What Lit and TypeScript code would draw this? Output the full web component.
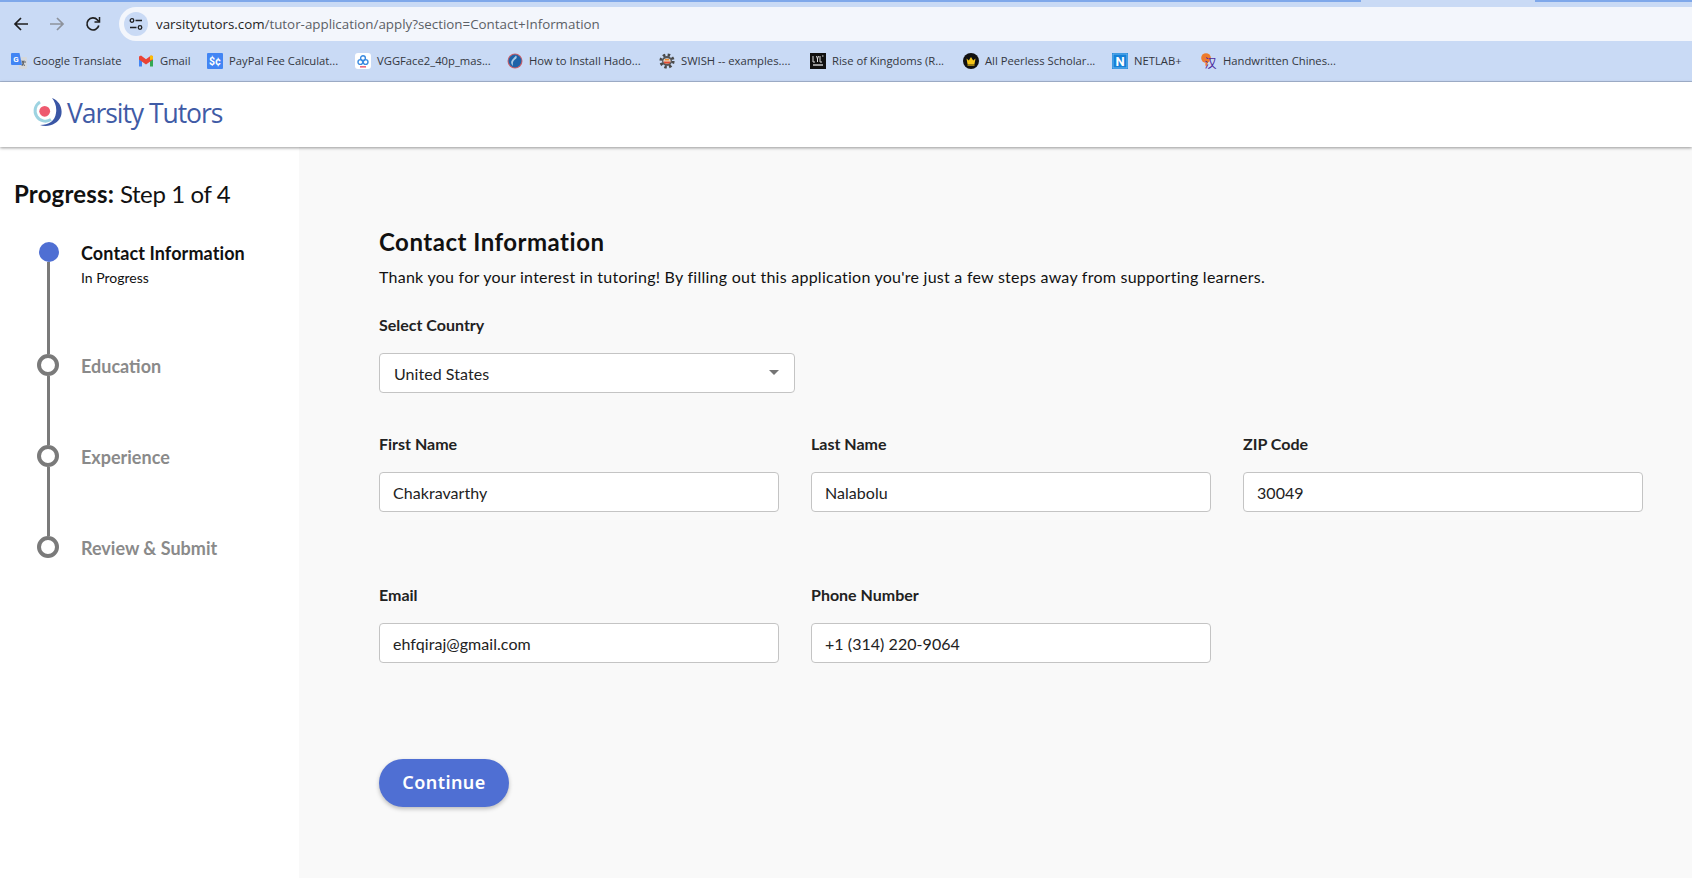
import { LitElement, css, html, svg } from 'lit';
import { customElement } from 'lit/decorators.js';

const BOOKMARK_ICONS = {
  translate: svg`
    <path d="M7 4h8a1 1 0 0 1 1 1v10a1 1 0 0 1-1 1H8z" fill="#d5d8dc"/>
    <path d="M11 7.5l2.5 5.5M13 7.5l-2 5.5M10.5 9h4.5" stroke="#5f6368" stroke-width="1" fill="none"/>
    <path d="M1 0h7.5l2.5 12H1a1 1 0 0 1-1-1V1a1 1 0 0 1 1-1z" fill="#4285f4"/>
    <text x="5" y="8.5" font-size="8" font-weight="700" text-anchor="middle" fill="#fff" font-family="Roboto, sans-serif">G</text>`,
  gmail: svg`
    <path d="M1 4v9.5h3V6.5z" fill="#4285f4"/>
    <path d="M15 4v9.5h-3V6.5z" fill="#34a853"/>
    <path d="M1 3.5v3L8 11.5l7-5v-3L13 2.5 8 6.2 3 2.5z" fill="#ea4335"/>
    <path d="M12 2.9V7l3-.5V3.5C15 2.5 13 2 12 2.9z" fill="#fbbc04"/>`,
  paypal: svg`
    <rect width="16" height="16" rx="1" fill="#4285f4"/>
    <text x="8" y="12" font-size="10.5" font-weight="700" text-anchor="middle" fill="#fff" font-family="Roboto, sans-serif">$¢</text>`,
  vgg: svg`
    <rect width="16" height="16" rx="3" fill="#fff"/>
    <g fill="none" stroke="#3b8be0" stroke-width="1.4">
      <circle cx="8" cy="5.2" r="2.4"/><circle cx="5.4" cy="9" r="2.4"/><circle cx="10.6" cy="9" r="2.4"/>
    </g>
    <rect x="5" y="13.2" width="6" height="1.3" fill="#e8455c"/>`,
  globe: svg`
    <circle cx="8" cy="8" r="7.5" fill="#c8606a"/>
    <circle cx="8" cy="8" r="6.4" fill="#1c62a8"/>
    <path d="M9 2.5c1.5 2 .5 3-1 4S5.500 9 6 13c-2-2-2.500-4-1-6s3-3 4-4.500z" fill="#a9cbe6"/>`,
  swish: svg`
    <circle cx="8" cy="8" r="6" fill="none" stroke="#4a4a4a" stroke-width="3.200" stroke-dasharray="2.400 2.300"/>
    <circle cx="8" cy="8" r="5" fill="#54565a"/>
    <ellipse cx="8" cy="8" rx="3.600" ry="2.800" fill="#e8e4de"/>
    <path d="M4.500 8.500h7l-1 2h-5z" fill="#e2492d"/>
    <path d="M6 6h4l.6 1.500H5.400z" fill="#f08a2c"/>`,
  rok: svg`
    <rect width="16" height="16" fill="#111"/>
    <path d="M3 3v6h2M6.500 3l1 3 1-3M7.500 6v3M10 3v6h2M13.500 3h-1.500" stroke="#ddd" stroke-width="1" fill="none"/>
    <rect x="3" y="11" width="10" height="2" fill="#999"/>`,
  crown: svg`
    <circle cx="8" cy="8" r="8" fill="#111"/>
    <path d="M3.500 5.500l2.300 2L8 4l2.200 3.500 2.300-2-1 5.500h-7z" fill="#f5c518"/>
    <rect x="4.500" y="11.400" width="7" height="1.200" fill="#f5c518"/>`,
  netlab: svg`
    <rect width="16" height="16" fill="#1581d8"/>
    <rect x="1" y="1" width="14" height="14" fill="none" stroke="#6cb6ee" stroke-width="1"/>
    <text x="8" y="13" font-size="13" font-weight="700" text-anchor="middle" fill="#fff" font-family="Roboto, sans-serif">N</text>`,
  hanzi: svg`
    <circle cx="5" cy="5" r="4.800" fill="#ee7b2c"/>
    <path d="M6 9c-1 2-1 3 0 4" stroke="#ee7b2c" stroke-width="2" fill="none"/>
    <text x="9.500" y="14.500" font-size="12" text-anchor="middle" fill="#4b2a9c" font-family="'Noto Sans CJK SC', sans-serif">汉</text>`,
};

const BOOKMARKS = [
  { icon: 'translate', label: 'Google Translate', width: 127 },
  { icon: 'gmail', label: 'Gmail', width: 69 },
  { icon: 'paypal', label: 'PayPal Fee Calculat...', width: 148 },
  { icon: 'vgg', label: 'VGGFace2_40p_mas...', width: 152 },
  { icon: 'globe', label: 'How to Install Hado...', width: 152 },
  { icon: 'swish', label: 'SWISH -- examples....', width: 151 },
  { icon: 'rok', label: 'Rise of Kingdoms (R...', width: 153 },
  { icon: 'crown', label: 'All Peerless Scholar...', width: 149 },
  { icon: 'netlab', label: 'NETLAB+', width: 89 },
  { icon: 'hanzi', label: 'Handwritten Chines...', width: 160 },
] as const;

const STEPS = [
  { label: 'Contact Information', note: 'In Progress', active: true },
  { label: 'Education', active: false },
  { label: 'Experience', active: false },
  { label: 'Review & Submit', active: false },
];

const FIELDS = [
  { label: 'First Name', value: 'Chakravarthy' },
  { label: 'Last Name', value: 'Nalabolu' },
  { label: 'ZIP Code', value: '30049' },
  { label: 'Email', value: 'ehfqiraj@gmail.com' },
  { label: 'Phone Number', value: '+1 (314) 220-9064' },
];

@customElement('app-root')
export class AppRoot extends LitElement {
  static styles = css`
    :host {
      display: flex;
      flex-direction: column;
      width: 100%;
      height: 878px;
      overflow: hidden;
      font-family: Lato, sans-serif;
      color: #111;
      background: #fff;
    }

    .tabstrip {
      display: flex;
      justify-content: space-between;
      height: 7px;
      background: #c9daf5;
      flex: none;
    }
    .tabstrip i {
      display: block;
      height: 2px;
      background: #7fa8ea;
    }
    .tabstrip i:first-child { width: 1361px; }
    .tabstrip i:last-child { width: 157px; }

    .toolbar {
      display: flex;
      align-items: center;
      height: 34px;
      padding-left: 3px;
      background: #c9daf5;
      flex: none;
    }
    .nav {
      display: flex;
      align-items: center;
      justify-content: center;
      width: 36px;
      height: 34px;
      flex: none;
    }
    .omnibox {
      display: flex;
      align-items: center;
      flex: 1;
      height: 34px;
      margin-left: 8px;
      padding-left: 5px;
      border-radius: 17px 0 0 17px;
      background: #f3f6fc;
      font-family: 'Open Sans', sans-serif;
      font-size: 13.35px;
      color: #5b5f66;
    }
    .site-info {
      display: flex;
      align-items: center;
      justify-content: center;
      width: 24px;
      height: 24px;
      margin-right: 8px;
      border-radius: 50%;
      background: #c9daf5;
    }
    .omnibox b {
      font-weight: 400;
      color: #1f1f1f;
    }

    .bookmarks {
      display: flex;
      align-items: center;
      height: 40px;
      padding-left: 11px;
      background: #c9daf5;
      border-bottom: 1px solid #a7b7d2;
      font-family: 'Open Sans', sans-serif;
      font-size: 11.25px;
      color: #33373f;
      flex: none;
    }
    .bookmark {
      display: flex;
      align-items: center;
      gap: 6px;
      flex: none;
      white-space: nowrap;
    }
    .bookmark svg { flex: none; }
    .bookmark span { margin-top: -2px; }

    .site-header {
      position: relative;
      z-index: 1;
      display: flex;
      align-items: center;
      gap: 5px;
      box-sizing: border-box;
      height: 65px;
      padding: 0 0 4px 32px;
      background: #fff;
      box-shadow: 0 1px 3px rgba(0, 0, 0, 0.4);
      flex: none;
    }
    .wordmark {
      font-family: 'Open Sans', sans-serif;
      font-size: 26.5px;
      letter-spacing: -1.05px;
      color: #3f5ba6;
    }

    .body {
      display: flex;
      flex: 1;
      min-height: 0;
    }

    .sidebar {
      width: 299px;
      box-sizing: border-box;
      padding: 31px 0 0 14px;
      background: #fff;
      flex: none;
    }
    .progress {
      margin: 0;
      font-size: 24px;
      font-weight: 400;
      line-height: 32px;
      letter-spacing: -0.4px;
    }
    .progress strong { letter-spacing: 0.2px; }
    .steps {
      margin-top: 33px;
      padding-left: 23px;
    }
    .step {
      display: flex;
      gap: 22px;
      height: 91px;
    }
    .step:first-child { height: 111px; }
    .step:last-child { height: 22px; }
    .marker {
      display: flex;
      flex-direction: column;
      align-items: center;
      width: 22px;
      flex: none;
    }
    .dot {
      box-sizing: border-box;
      width: 22px;
      height: 22px;
      border: 4px solid #7a7a7a;
      border-radius: 50%;
      background: #fff;
      flex: none;
    }
    .step.active .dot {
      width: 20px;
      height: 20px;
      margin: -1px 0 0 2px;
      border: 0;
      background: #4f6fd3;
    }
    .line {
      width: 3px;
      flex: 1;
      background: #7a7a7a;
    }
    .step-label {
      padding-top: 1px;
      font-size: 18px;
      font-weight: 700;
      line-height: 22px;
      color: #8a8a8a;
    }
    .step.active .step-label {
      padding-top: 0;
      margin-top: -1px;
      letter-spacing: 0.1px;
      color: #111;
    }
    .step-note {
      margin-top: 5px;
      font-size: 14px;
      line-height: 18px;
    }

    .main {
      flex: 1;
      box-sizing: border-box;
      padding: 80px 49px 0 80px;
      background: #f9f9f9;
    }
    h2 {
      margin: 0;
      font-size: 24px;
      font-weight: 700;
      line-height: 30px;
      letter-spacing: 0.5px;
    }
    .intro {
      margin: 8px 0 0;
      font-size: 16px;
      line-height: 24px;
      letter-spacing: 0.25px;
    }
    label {
      display: block;
      font-size: 16px;
      font-weight: 700;
      line-height: 20px;
      color: #222;
    }
    .country { margin-top: 26px; }
    .box {
      display: flex;
      align-items: center;
      justify-content: space-between;
      box-sizing: border-box;
      width: 100%;
      height: 40px;
      margin-top: 18px;
      padding: 0 13px;
      border: 1px solid #c4c4c4;
      border-radius: 4px;
      background: #fff;
      font: 400 16px Lato, sans-serif;
      letter-spacing: 0.05px;
      color: #222;
      outline: none;
    }
    .select {
      width: 416px;
      padding: 0 15px 0 14px;
    }
    .select svg { margin-top: -1px; }
    .fields {
      display: grid;
      grid-template-columns: repeat(3, 1fr);
      gap: 73px 32px;
      margin-top: 41px;
    }
    .continue {
      display: block;
      width: 130px;
      height: 48px;
      margin-top: 96px;
      padding: 0 0 2px;
      border: 0;
      border-radius: 24px;
      background: #4f6fd3;
      box-shadow: 0 2px 4px rgba(0, 0, 0, 0.25);
      font-family: 'Noto Sans', sans-serif;
      font-size: 18px;
      font-weight: 600;
      letter-spacing: 0.45px;
      color: #fff;
    }
  `;

  renderToolbar() {
    return html`
      <div class="tabstrip"><i></i><i></i></div>
      <div class="toolbar">
        <span class="nav">
          <svg width="16" height="16" viewBox="0 0 16 16" fill="none" stroke="#1f1f1f" stroke-width="1.7">
            <path d="M15 8H2M8 2 2 8l6 6" />
          </svg>
        </span>
        <span class="nav">
          <svg width="16" height="16" viewBox="0 0 16 16" fill="none" stroke="#8d929b" stroke-width="1.700">
            <path d="M1 8h13M8 2l6 6-6 6" />
          </svg>
        </span>
        <span class="nav">
          <svg width="16" height="16" viewBox="0 0 16 16" fill="none" stroke="#1f1f1f" stroke-width="1.700">
            <path d="M13.800 9.500A6 6 0 1 1 12.500 4L14 5.500" />
            <path d="M14.500 1v5h-5" stroke-width="1.500" />
          </svg>
        </span>
        <div class="omnibox">
          <span class="site-info">
            <svg width="14" height="14" viewBox="0 0 14 14" fill="none" stroke="#1f1f1f" stroke-width="1.300">
              <circle cx="3" cy="3.500" r="1.800" />
              <path d="M6.500 3.500H13M1 10.500h6.500" />
              <circle cx="11" cy="10.500" r="1.800" />
            </svg>
          </span>
          <span><b>varsitytutors.com</b>/tutor-application/apply?section=Contact+Information</span>
        </div>
      </div>
      <div class="bookmarks">
        ${BOOKMARKS.map(
          (item) => html`
            <span class="bookmark" style="width:${item.width}px">
              <svg width="16" height="16" viewBox="0 0 16 16">${BOOKMARK_ICONS[item.icon]}</svg>
              <span>${item.label}</span>
            </span>
          `
        )}
      </div>
    `;
  }

  renderSidebar() {
    return html`
      <aside class="sidebar">
        <p class="progress"><strong>Progress:</strong> Step 1 of 4</p>
        <div class="steps">
          ${STEPS.map(
            (step, i) => html`
              <div class="step ${step.active ? 'active' : ''}">
                <div class="marker">
                  <span class="dot"></span>
                  ${i < STEPS.length - 1 ? html`<span class="line"></span>` : ''}
                </div>
                <div>
                  <div class="step-label">${step.label}</div>
                  ${step.note ? html`<div class="step-note">${step.note}</div>` : ''}
                </div>
              </div>
            `
          )}
        </div>
      </aside>
    `;
  }

  render() {
    return html`
      ${this.renderToolbar()}
      <header class="site-header">
        <svg width="30" height="30" viewBox="6 5 30 30">
          <circle cx="18.700" cy="18.300" r="5.400" fill="#ee5a6f" />
          <path d="M14 8.900A10.400 10.400 0 0 0 25 26.600" fill="none" stroke="#9dd3e1" stroke-width="3" />
          <path d="M26 5C34 8 37 16 35 23 32 31 22 35 14 32 23 32 29 28 30 20 31 14 29 9 26 5Z" fill="#3a56a5" />
        </svg>
        <span class="wordmark">Varsity Tutors</span>
      </header>
      <div class="body">
        ${this.renderSidebar()}
        <main class="main">
          <h2>Contact Information</h2>
          <p class="intro">
            Thank you for your interest in tutoring! By filling out this application you're just a few steps
            away from supporting learners.
          </p>
          <div class="country">
            <label>Select Country</label>
            <div class="box select">
              United States
              <svg width="10" height="5" viewBox="0 0 10 5"><path d="M0 0h10L5 5z" fill="#757575" /></svg>
            </div>
          </div>
          <div class="fields">
            ${FIELDS.map(
              (field) => html`
                <div>
                  <label>${field.label}</label>
                  <input class="box" .value=${field.value} />
                </div>
              `
            )}
          </div>
          <button class="continue">Continue</button>
        </main>
      </div>
    `;
  }
}
